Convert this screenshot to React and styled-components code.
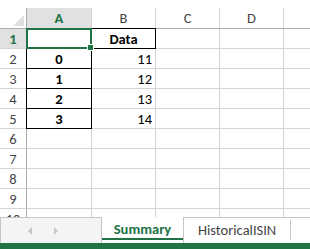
import React from "react";
import styled, { createGlobalStyle, css } from "styled-components";

const Global = createGlobalStyle`
  html, body { margin: 0; padding: 0; background: #fff; overflow: hidden; }
  body { font-family: Carlito, Lato, "Liberation Sans", sans-serif; }
`;

const GREEN = "#217346";
const GRID = "#d4d4d4";

const Frame = styled.div`
  width: 310px;
  height: 249px;
  display: flex;
  flex-direction: column;
  overflow: hidden;
  background: #fff;
`;

const TopStrip = styled.div`
  height: 8px;
  flex: none;
`;

const Sheet = styled.div`
  flex: 1;
  overflow: hidden;
  display: grid;
  grid-template-columns: 27px 65px 64px 64px 64px 64px;
  grid-auto-rows: 20px;
  grid-template-rows: 21px;
  align-content: start;
`;

const Corner = styled.div`
  position: relative;
  border-right: 1px solid #ababab;
  border-bottom: 1px solid #ababab;
  box-sizing: border-box;
  &::after {
    content: "";
    position: absolute;
    right: 2px;
    bottom: 2px;
    width: 0;
    height: 0;
    border-left: 11px solid transparent;
    border-bottom: 11px solid #dfdfdf;
  }
`;

const ColHead = styled.div`
  box-sizing: border-box;
  border-right: 1px solid ${GRID};
  border-bottom: 1px solid #ababab;
  display: flex;
  align-items: center;
  justify-content: center;
  font-size: 14.5px;
  color: #444;
  ${(p) =>
    p.$active &&
    css`
      background: #e1e1e1;
      color: ${GREEN};
      font-weight: 700;
    `}
`;

const RowHead = styled.div`
  box-sizing: border-box;
  border-right: 1px solid #ababab;
  border-bottom: 1px solid ${GRID};
  display: flex;
  align-items: center;
  justify-content: center;
  font-size: 14.5px;
  color: #444;
  ${(p) =>
    p.$active &&
    css`
      background: #e1e1e1;
      color: ${GREEN};
      font-weight: 700;
    `}
`;

const Cell = styled.div`
  position: relative;
  box-sizing: border-box;
  border-right: 1px solid ${GRID};
  border-bottom: 1px solid ${GRID};
  display: flex;
  align-items: center;
  justify-content: ${(p) => (p.$align === "right" ? "flex-end" : "center")};
  padding: 0 3px;
  font-size: 14.5px;
  color: #000;
  font-weight: ${(p) => (p.$bold ? 700 : 400)};
  ${(p) =>
    p.$boxed &&
    css`
      &::before {
        content: "";
        position: absolute;
        top: -1px;
        left: -1px;
        right: -1px;
        bottom: -1px;
        border: 1px solid #000;
        pointer-events: none;
      }
    `}
`;

const Selection = styled.div`
  position: absolute;
  top: -1px;
  left: -1px;
  right: -1px;
  bottom: -1px;
  border: 2px solid ${GREEN};
  pointer-events: none;
  z-index: 2;
`;

const Handle = styled.div`
  position: absolute;
  right: -4px;
  bottom: -4px;
  width: 5px;
  height: 5px;
  background: ${GREEN};
  border: 1px solid #fff;
`;

const TabBar = styled.div`
  height: 26px;
  flex: none;
  display: flex;
  align-items: stretch;
`;

const NavBox = styled.div`
  width: 102px;
  box-sizing: border-box;
  background: #f4f4f4;
  border-top: 1px solid #c6c6c6;
  border-right: 1px solid #c6c6c6;
  border-left: 1px solid #c6c6c6;
  display: flex;
  align-items: center;
  padding-left: 27px;
  gap: 22px;
`;

const Arrow = styled.span`
  width: 0;
  height: 0;
  border-top: 4px solid transparent;
  border-bottom: 4px solid transparent;
  ${(p) =>
    p.$dir === "left"
      ? css`border-right: 4px solid #c6c6c6;`
      : css`border-left: 4px solid #c6c6c6;`}
`;

const ActiveTab = styled.div`
  width: 82px;
  box-sizing: border-box;
  border-right: 1px solid #c6c6c6;
  display: flex;
  align-items: center;
  justify-content: center;
  font-size: 14.5px;
  font-weight: 700;
  color: ${GREEN};
  position: relative;
  padding-bottom: 2px;
  &::after {
    content: "";
    position: absolute;
    left: 0;
    right: 0;
    bottom: 3px;
    height: 2px;
    background: ${GREEN};
  }
`;

const Rest = styled.div`
  flex: 1;
  border-top: 1px solid #c6c6c6;
  display: flex;
  align-items: center;
  padding-left: 14px;
  padding-bottom: 2px;
`;

const Tab = styled.div`
  font-size: 14.5px;
  color: #444;
  padding-right: 14px;
`;

const Sep = styled.div`
  width: 1px;
  height: 20px;
  background: #c6c6c6;
`;

const GreenBar = styled.div`
  height: 6px;
  flex: none;
  background: ${GREEN};
`;

const cols = ["A", "B", "C", "D", ""];
const data = [
  ["", "Data"],
  ["0", "11"],
  ["1", "12"],
  ["2", "13"],
  ["3", "14"],
];

export default function App() {
  const rows = [];
  for (let r = 1; r <= 10; r++) {
    const d = data[r - 1];
    rows.push(
      <RowHead key={`h${r}`} $active={r === 1}>
        {r}
      </RowHead>
    );
    cols.forEach((c, i) => {
      let content = null;
      let props = {};
      if (d && i === 0) {
        content = d[0];
        props = { $bold: true, $boxed: r > 1 };
      } else if (d && i === 1) {
        content = d[1];
        props = r === 1 ? { $bold: true, $boxed: true } : { $align: "right" };
      }
      rows.push(
        <Cell key={`c${i}-${r}`} {...props}>
          {content}
          {r === 1 && i === 0 && (
            <Selection>
              <Handle />
            </Selection>
          )}
        </Cell>
      );
    });
  }
  return (
    <>
      <Global />
      <Frame>
        <TopStrip />
        <Sheet>
          <Corner />
          {cols.map((c, i) => (
            <ColHead key={`h${i}`} $active={i === 0}>
              {c}
            </ColHead>
          ))}
          {rows}
        </Sheet>
        <TabBar>
          <NavBox>
            <Arrow $dir="left" />
            <Arrow $dir="right" />
          </NavBox>
          <ActiveTab>Summary</ActiveTab>
          <Rest>
            <Tab>HistoricalISIN</Tab>
            <Sep />
          </Rest>
        </TabBar>
        <GreenBar />
      </Frame>
    </>
  );
}
